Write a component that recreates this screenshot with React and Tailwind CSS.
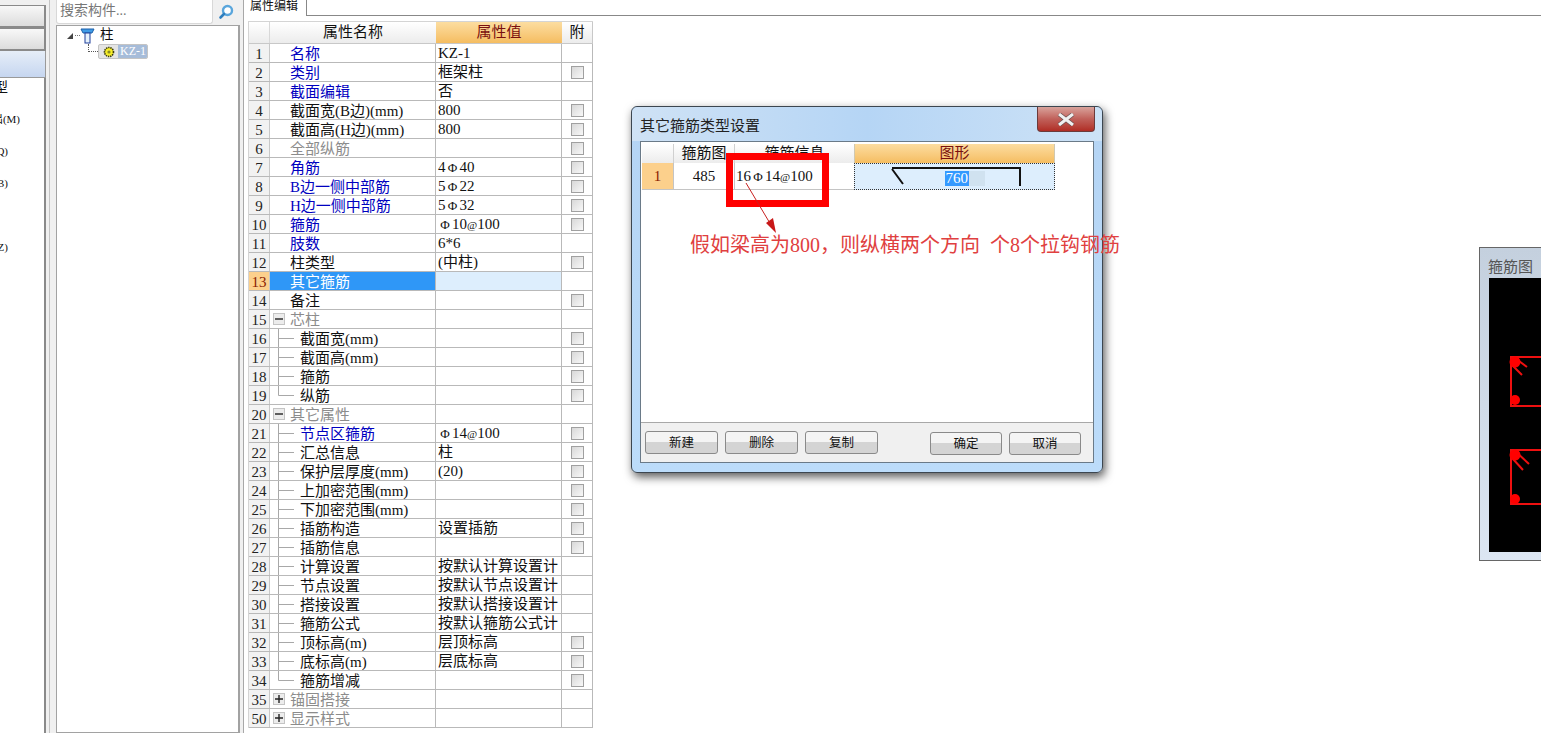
import React from 'react';

const rows = [
  { n: 1, name: '名称', c: 'blue', value: 'KZ-1' },
  { n: 2, name: '类别', c: 'blue', value: '框架柱', check: true },
  { n: 3, name: '截面编辑', c: 'blue', value: '否' },
  { n: 4, name: '截面宽(B边)(mm)', value: '800', check: true },
  { n: 5, name: '截面高(H边)(mm)', value: '800', check: true },
  { n: 6, name: '全部纵筋', c: 'gray', check: true },
  { n: 7, name: '角筋', c: 'blue', value: ['4', '40'], check: true },
  { n: 8, name: 'B边一侧中部筋', c: 'blue', value: ['5', '22'], check: true },
  { n: 9, name: 'H边一侧中部筋', c: 'blue', value: ['5', '32'], check: true },
  { n: 10, name: '箍筋', c: 'blue', value: ['', '10', '100'], check: true },
  { n: 11, name: '肢数', c: 'blue', value: '6*6' },
  { n: 12, name: '柱类型', value: '(中柱)', check: true },
  { n: 13, name: '其它箍筋', selected: true },
  { n: 14, name: '备注', check: true },
  { n: 15, name: '芯柱', c: 'gray', group: '-' },
  { n: 16, name: '截面宽(mm)', tree: 'mid', check: true },
  { n: 17, name: '截面高(mm)', tree: 'mid', check: true },
  { n: 18, name: '箍筋', tree: 'mid', check: true },
  { n: 19, name: '纵筋', tree: 'end', check: true },
  { n: 20, name: '其它属性', c: 'gray', group: '-' },
  { n: 21, name: '节点区箍筋', c: 'blue', tree: 'mid', value: ['', '14', '100'], check: true },
  { n: 22, name: '汇总信息', tree: 'mid', value: '柱', check: true },
  { n: 23, name: '保护层厚度(mm)', tree: 'mid', value: '(20)', check: true },
  { n: 24, name: '上加密范围(mm)', tree: 'mid', check: true },
  { n: 25, name: '下加密范围(mm)', tree: 'mid', check: true },
  { n: 26, name: '插筋构造', tree: 'mid', value: '设置插筋', check: true },
  { n: 27, name: '插筋信息', tree: 'mid', check: true },
  { n: 28, name: '计算设置', tree: 'mid', value: '按默认计算设置计' },
  { n: 29, name: '节点设置', tree: 'mid', value: '按默认节点设置计' },
  { n: 30, name: '搭接设置', tree: 'mid', value: '按默认搭接设置计' },
  { n: 31, name: '箍筋公式', tree: 'mid', value: '按默认箍筋公式计' },
  { n: 32, name: '顶标高(m)', tree: 'mid', value: '层顶标高', check: true },
  { n: 33, name: '底标高(m)', tree: 'mid', value: '层底标高', check: true },
  { n: 34, name: '箍筋增减', tree: 'end', check: true },
  { n: 35, name: '锚固搭接', c: 'gray', group: '+' },
  { n: 50, name: '显示样式', c: 'gray', group: '+' },
];

const nameColors = {
  blue: 'text-[#0000c0]',
  gray: 'text-[#8c8c8c]',
};

function Phi() {
  return <span className="inline-block w-[14px] text-center text-[13px]">Φ</span>;
}

function AtSign() {
  return <span className="text-[11px]">@</span>;
}

function RebarValue({ value }) {
  if (Array.isArray(value)) {
    return (
      <>
        {value[0]}
        <Phi />
        {value[1]}
        {value[2] && <AtSign />}
        {value[2]}
      </>
    );
  }
  return value || null;
}

function TreeLine({ kind }) {
  return (
    <svg width="30" height="19" className="shrink-0" viewBox="0 0 30 19">
      <path d={kind === 'end' ? 'M8.5 0V9.5H24' : 'M8.5 0V19M8.5 9.5H24'} stroke="#a8a8a8" fill="none" />
    </svg>
  );
}

function GroupBox({ sign }) {
  return (
    <span className="ml-[3px] mr-[5px] flex h-[12px] w-[12px] shrink-0 items-center justify-center border border-[#c4c4c4] bg-[#ececec]">
      <svg width="8" height="8" viewBox="0 0 8 8">
        <path d={sign === '+' ? 'M0 4H8M4 0V8' : 'M0 4H8'} stroke="#222" strokeWidth="1.4" />
      </svg>
    </span>
  );
}

function Check() {
  return <span className="block h-[13px] w-[13px] border border-[#a0a0a0] bg-gradient-to-br from-[#d8d8d8] to-[#f8f8f8]" />;
}

function PropRow({ row }) {
  const textColor = row.selected ? 'text-white' : nameColors[row.c] || 'text-[#111]';
  return (
    <div className="flex h-[19px] border-b border-[#b9b9b9] leading-[18px]">
      <div className={`w-[21px] shrink-0 border-r border-[#c8c8c8] pt-px text-center ${row.selected ? 'bg-[#fcd08c] text-[#8a2000]' : 'bg-[#f2f2f2] text-[#222]'}`}>
        {row.n}
      </div>
      <div className={`flex w-[166px] shrink-0 items-center overflow-hidden whitespace-nowrap border-r border-[#b9b9b9] ${row.selected ? 'bg-[#2f97f7]' : ''} ${textColor}`}>
        {row.tree ? <TreeLine kind={row.tree} /> : row.group ? <GroupBox sign={row.group} /> : <span className="w-[20px] shrink-0" />}
        <span className="pt-[2px]">{row.name}</span>
      </div>
      <div className={`w-[126px] shrink-0 overflow-hidden whitespace-nowrap border-r border-[#b9b9b9] pl-[2px] text-[#111] ${row.selected ? 'bg-[#ddeefd]' : ''}`}>
        <RebarValue value={row.value} />
      </div>
      <div className="flex w-[31px] shrink-0 items-center justify-center border-r border-[#b9b9b9]">
        {row.check && <Check />}
      </div>
    </div>
  );
}

function PropTable() {
  return (
    <div className="ml-[1px] mt-[5px] w-[345px] border-l border-t border-[#d4d4d4] text-[15px]">
      <div className="flex h-[22px] border-b border-[#c8c8c8] leading-[20px]">
        <div className="w-[21px] shrink-0 border-r border-[#d8d8d8] bg-gradient-to-b from-white to-[#ececec]" />
        <div className="w-[166px] shrink-0 bg-gradient-to-b from-white to-[#ececec] text-center text-[#111]">属性名称</div>
        <div className="w-[126px] shrink-0 bg-gradient-to-b from-[#fcdda0] to-[#f5bd60] text-center text-[#7a1010]">属性值</div>
        <div className="w-[31px] shrink-0 border-r border-[#c8c8c8] bg-gradient-to-b from-white to-[#ececec] text-center text-[#111]">附</div>
      </div>
      {rows.map((row) => (
        <PropRow key={row.n} row={row} />
      ))}
    </div>
  );
}

function LeftList() {
  return (
    <div className="flex w-[56px] shrink-0 bg-[#f0f0f0]">
      <div className="flex h-full w-[46px] flex-col pt-[5px]">
        <div className="h-[23px] border-b-2 border-r-2 border-t border-[#8a8a8a] bg-gradient-to-b from-[#f8f8f8] to-[#dcdcdc]" />
        <div className="h-[23px] border-b-2 border-r-2 border-t border-[#8a8a8a] bg-gradient-to-b from-[#f8f8f8] to-[#dcdcdc]" />
        <div className="h-[27px] border-b border-r border-[#9a9a9a] bg-gradient-to-b from-[#e6eef8] to-[#c6d6f0]" />
        <div className="flex-1 overflow-hidden border-r-2 border-[#8a8a8a] bg-white text-[11px] leading-[32px] text-[#111]">
          <div className="flex w-[8px] justify-end whitespace-nowrap text-[14px] leading-[20px]">类型</div>
          <div className="mt-[5px] flex w-[20px] justify-end whitespace-nowrap">出(M)</div>
          <div className="flex w-[8px] justify-end whitespace-nowrap">(Q)</div>
          <div className="flex w-[8px] justify-end whitespace-nowrap">(B)</div>
          <div className="h-[32px]" />
          <div className="flex w-[8px] justify-end whitespace-nowrap">(Z)</div>
        </div>
      </div>
      <div className="ml-[3px] w-px bg-[#c4c4c4]" />
    </div>
  );
}

function ColumnIcon() {
  return (
    <svg width="15" height="16" viewBox="0 0 15 16" className="shrink-0">
      <path d="M1 1H14L12 5H3Z" fill="#3f9be6" stroke="#1d5fa8" />
      <rect x="5" y="5" width="5" height="10" fill="#e6f1fb" stroke="#1f3f9a" />
    </svg>
  );
}

function GearIcon() {
  return (
    <svg width="12" height="12" viewBox="0 0 12 12" className="shrink-0">
      <circle cx="6" cy="6" r="4.5" fill="#f6ee28" stroke="#3a3a10" strokeDasharray="1.4 0.8" strokeWidth="1.6" />
      <circle cx="6" cy="6" r="1.6" fill="#8a8a20" />
    </svg>
  );
}

function TreePanel() {
  return (
    <div className="flex w-[184px] shrink-0 flex-col bg-[#f0f0f0]">
      <div className="flex h-[25px] shrink-0">
        <div className="h-[24px] w-[157px] rounded-b-[3px] border border-t-0 border-[#d8d8d8] bg-white pl-[3px] text-[14px] leading-[21px] text-[#777]">
          搜索构件...
        </div>
        <svg width="16" height="16" viewBox="0 0 16 16" className="ml-[5px] mt-[4px]">
          <circle cx="9.5" cy="6.5" r="4.5" fill="#fff" stroke="#5aa6dc" strokeWidth="2.4" />
          <path d="M6 10L2.5 13.5" stroke="#2f7fbf" strokeWidth="2.6" strokeLinecap="round" />
        </svg>
      </div>
      <div className="flex-1 border-y border-l border-r-2 border-[#a2a2a2] bg-white pl-[10px] pt-[1px]">
        <div className="flex h-[17px] items-center">
          <span className="h-0 w-0 border-b-[6px] border-l-[6px] border-b-[#444] border-l-transparent" />
          <span className="ml-[2px] h-0 w-[5px] border-t border-dotted border-[#777]" />
          <ColumnIcon />
          <span className="ml-[5px] text-[13.5px] text-[#111]">柱</span>
        </div>
        <div className="ml-[21px] flex h-[16px]">
          <span className="h-[8px] w-[10px] border-b border-l border-dotted border-[#555]" />
          <div className="flex h-[15px] w-[50px] items-center overflow-hidden rounded-[2px] border border-[#c4c4c4] bg-[#e4e4e4]">
            <span className="flex w-[19px] justify-center"><GearIcon /></span>
            <span className="h-full flex-1 bg-[#a6bcd9] pl-[2px] text-[12px] leading-[13px] text-white">KZ-1</span>
          </div>
        </div>
      </div>
    </div>
  );
}

function DialogTable() {
  return (
    <div className="px-[1px] pt-[2px] text-[15px]">
      <div className="flex h-[19px] leading-[19px]">
        <div className="w-[31px] bg-gradient-to-b from-white to-[#ececec]" />
        <div className="w-[61px] border-l border-[#d0d0d0] bg-gradient-to-b from-white to-[#ececec] text-center text-[#111]">箍筋图</div>
        <div className="w-[120px] border-l border-[#d0d0d0] bg-gradient-to-b from-white to-[#ececec] text-center text-[#111]">箍筋信息</div>
        <div className="w-[201px] border-x border-[#d0c8b0] bg-gradient-to-b from-[#fcdda0] to-[#f5bd60] text-center text-[#7a1010]">图形</div>
      </div>
      <div className="flex h-[27px] leading-[27px]">
        <div className="w-[31px] border-b border-[#c4c4c4] bg-[#fcd08c] text-center text-[#8a2000]">1</div>
        <div className="w-[61px] border-b border-l border-[#c4c4c4] text-center text-[#111]">485</div>
        <div className="w-[120px] border-b border-l border-[#c4c4c4] pl-[1px] text-[#111]">
          16<Phi />14<AtSign />100
        </div>
        <div className="flex w-[201px] items-center border border-dotted border-[#333] bg-[#ddeefd]">
          <svg width="199" height="25" viewBox="0 0 199 25" className="shrink-0">
            <path d="M37 5L48 20M37 4H165V22" fill="none" stroke="#111" strokeWidth="2" />
            <rect x="90" y="7" width="40" height="15" fill="#d0e2f0" />
            <rect x="90" y="7" width="24" height="15" fill="#3399ff" />
            <text x="90.5" y="19" fontSize="15" fill="#fff" fontFamily="Liberation Serif">760</text>
          </svg>
        </div>
      </div>
    </div>
  );
}

function DialogButton({ children, className = '' }) {
  return (
    <button className={`h-[23px] rounded-[3px] border border-[#8a8a8a] bg-gradient-to-b from-[#f4f4f4] from-50% to-[#d4d4d4] to-50% text-[12.5px] leading-[20px] text-[#111] ${className}`}>
      {children}
    </button>
  );
}

function Dialog() {
  return (
    <div className="absolute left-[631px] top-[106px] flex h-[367px] w-[472px] flex-col rounded-[6px] border border-[#3c4650] bg-gradient-to-b from-[#b4d4f4] to-[#bcdcfa] shadow-[2px_4px_10px_rgba(0,0,0,0.65)]">
      <div className="flex h-[34px] shrink-0 justify-between rounded-t-[6px] bg-gradient-to-r from-[#cfe2f5] via-[#b5d5f5] to-[#cde2f6] pl-[8px]">
        <span className="pt-[8px] text-[15px] text-[#222]">其它箍筋类型设置</span>
        <span className="mr-[7px] flex h-[25px] w-[58px] items-center justify-center rounded-b-[4px] border border-t-0 border-[#6c3a3a] bg-gradient-to-b from-[#d8a39c] via-[#c0605a] to-[#b02c24]">
          <svg width="18" height="13" viewBox="0 0 18 13">
            <path d="M2 1L16 12M16 1L2 12" stroke="#6a5050" strokeWidth="4.4" />
            <path d="M2 1L16 12M16 1L2 12" stroke="#f0f0f0" strokeWidth="3" />
          </svg>
        </span>
      </div>
      <div className="mx-[8px] mb-[9px] flex flex-1 flex-col border border-[#6a7a88] bg-white">
        <div className="flex-1">
          <DialogTable />
        </div>
        <div className="flex h-[40px] shrink-0 border-t border-[#a8a8a8] bg-[#f0f0f0] pl-[4px] pt-[8px]">
          <DialogButton className="w-[73px]">新建</DialogButton>
          <DialogButton className="ml-[7px] w-[73px]">删除</DialogButton>
          <DialogButton className="ml-[7px] w-[73px]">复制</DialogButton>
          <DialogButton className="ml-[52px] mt-[1px] w-[72px]">确定</DialogButton>
          <DialogButton className="ml-[7px] mt-[1px] w-[72px]">取消</DialogButton>
        </div>
      </div>
    </div>
  );
}

function Annotation() {
  return (
    <>
      <div className="absolute left-[726px] top-[153px] h-[54px] w-[103px] border-[7px] border-[#ff0000]" />
      <svg className="absolute left-[740px] top-[180px]" width="50" height="60" viewBox="0 0 50 60">
        <path d="M6 3L31 45" stroke="#c82020" strokeWidth="1" />
        <path d="M36 53L26 43L33 38Z" fill="#c81818" />
      </svg>
      <div className="absolute left-[690px] top-[232px] whitespace-pre text-[20px] leading-[26px] text-[#e04040]">
        假如梁高为800，则纵横两个方向  个8个拉钩钢筋
      </div>
    </>
  );
}

function RebarWindow() {
  return (
    <div className="absolute left-[1479px] top-[247px] flex h-[314px] w-[62px] flex-col border-b border-l border-t border-[#666] bg-gradient-to-b from-[#c4d0de] to-[#dce6f2] pl-[9px]">
      <div className="h-[30px] shrink-0 pt-[10px] text-[15px] leading-[18px] text-[#555]">
        <span className="-ml-[1px] whitespace-nowrap">箍筋图</span>
      </div>
      <div className="h-[274px] w-full bg-black">
        <svg width="52" height="274" viewBox="0 0 52 274">
          <g fill="none" stroke="#ee1010" strokeWidth="2">
            <path d="M52 79H22V128H52" />
            <path d="M26 80L38 89M24 88L33 97" />
            <path d="M52 172H22V226H52" />
            <path d="M26 173L40 186M24 181L34 192" />
          </g>
          <g fill="#ff0000">
            <circle cx="26" cy="84" r="5.5" />
            <circle cx="26" cy="122" r="5" />
            <circle cx="26" cy="177" r="5.5" />
            <circle cx="26" cy="221" r="5" />
          </g>
        </svg>
      </div>
    </div>
  );
}

export default function App() {
  return (
    <div className="relative flex h-[733px] w-[1541px] overflow-hidden bg-white font-['Liberation_Serif','Noto_Sans_CJK_SC',sans-serif]">
      <LeftList />
      <TreePanel />
      <div className="w-[4px] shrink-0 border-r border-[#a8a8a8] bg-[#f0f0f0]" />
      <div className="flex-1 pl-[3px]">
        <div className="flex h-[16px]">
          <div className="h-full w-[60px] overflow-hidden whitespace-nowrap border-r border-[#888] pl-[3px] text-[12px] leading-[12px] text-[#111]">属性编辑</div>
          <div className="flex-1 border-b border-[#888]" />
        </div>
        <PropTable />
      </div>
      <Dialog />
      <Annotation />
      <RebarWindow />
    </div>
  );
}
